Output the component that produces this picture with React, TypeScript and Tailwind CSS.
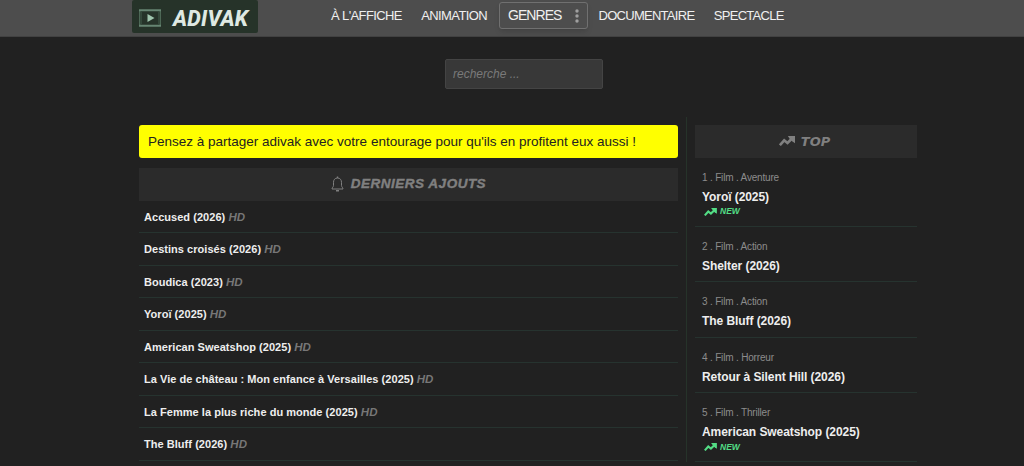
interface Movie {
  title: string
  year: number
}

interface TopMovie extends Movie {
  kind: string
  isNew?: boolean
}

const latest: Movie[] = [
  { title: 'Accused', year: 2026 },
  { title: 'Destins croisés', year: 2026 },
  { title: 'Boudica', year: 2023 },
  { title: 'Yoroï', year: 2025 },
  { title: 'American Sweatshop', year: 2025 },
  { title: 'La Vie de château : Mon enfance à Versailles', year: 2025 },
  { title: 'La Femme la plus riche du monde', year: 2025 },
  { title: 'The Bluff', year: 2026 },
]

const top: TopMovie[] = [
  { title: 'Yoroï', year: 2025, kind: 'Aventure', isNew: true },
  { title: 'Shelter', year: 2026, kind: 'Action' },
  { title: 'The Bluff', year: 2026, kind: 'Action' },
  { title: 'Retour à Silent Hill', year: 2026, kind: 'Horreur' },
  { title: 'American Sweatshop', year: 2025, kind: 'Thriller', isNew: true },
]

function TrendIcon({ className }: { className: string }) {
  return (
    <svg viewBox="0 0 16 10" className={className} fill="none">
      <path d="M.9 9.200 5.200 4.300 8.500 7 12.500 3" stroke="currentColor" strokeWidth="2.600" />
      <path d="M8.800 0H16V7.200L13.200 5.200 11 3.200Z" fill="currentColor" />
    </svg>
  )
}

function BellIcon() {
  return (
    <svg viewBox="0 0 13 16" className="h-[16px] w-[13px]" fill="none" stroke="currentColor">
      <path d="M6.500 2C3.800 2 2.500 4 2.500 6.300V9.500C2.500 11 1 11.500 1 13H12C12 11.500 10.500 11 10.500 9.500V6.300C10.500 4 9.200 2 6.500 2Z" />
      <path d="M6.500 .5V2M5 14.800H8" strokeWidth="1.400" />
    </svg>
  )
}

function Logo() {
  return (
    <a className="flex h-[33px] w-[126px] items-center rounded-[2px] bg-[#263329] pt-[2px] pl-[7px]">
      <svg viewBox="0 0 22 18" className="h-[18px] w-[22px]">
        <path d="M.7 1V17M21.300 1V17" stroke="#4d6856" strokeWidth="1.400" />
        <path d="M0 1.200H22M0 16.800H22" stroke="#668572" strokeWidth="2" />
        <path d="M2.500 2V16M19.500 2V16" stroke="#34493b" />
        <path d="M8.500 5V13L15.500 9Z" fill="#9fc5ad" />
      </svg>
      <span className="ml-[12px] pt-[2px] font-[Roboto,sans-serif] text-[21.500px] leading-none font-extrabold tracking-[0.2px] text-[#dfe9e2] italic">
        ADIVAK
      </span>
    </a>
  )
}

function Header() {
  return (
    <header className="flex h-[37px] items-start border-b border-[#414141] bg-[#4d4d4d] pl-[132px]">
      <Logo />
      <nav className="ml-[73px] flex items-center text-[13px] tracking-[-0.62px] text-[#f0f0f0]">
        <a className="pt-[2px]">À L'AFFICHE</a>
        <a className="ml-[19.500px] pt-[2px]">ANIMATION</a>
        <a className="mt-[2px] ml-[12px] flex h-[27px] w-[89px] items-center justify-between rounded-[3px] border border-[#707070] pr-[8px] pl-[8px] text-[14px] tracking-[-0.95px] shadow-md">
          GENRES
          <svg viewBox="0 0 4 14" className="h-[14px] w-[4px]" fill="#a0a0a0">
            <circle cx="2" cy="2" r="1.700" />
            <circle cx="2" cy="7" r="1.700" />
            <circle cx="2" cy="12" r="1.700" />
          </svg>
        </a>
        <a className="ml-[10.500px] pt-[2px] tracking-[-0.72px]">DOCUMENTAIRE</a>
        <a className="ml-[19.500px] pt-[2px] tracking-[-0.72px]">SPECTACLE</a>
      </nav>
    </header>
  )
}

function LatestRow({ movie }: { movie: Movie }) {
  return (
    <li className="h-[32.5px] border-b border-[#26332f] pl-[5px] text-[11px] leading-[32px] font-bold tracking-[0.04px] text-[#eeeeee]">
      {movie.title} ({movie.year}) <i className="text-[11.500px] font-bold text-[#777777]">HD</i>
    </li>
  )
}

function TopRow({ movie, rank }: { movie: TopMovie; rank: number }) {
  return (
    <li className="border-b border-[#26332f] pt-[13px] pb-[7px] pl-[7px]">
      <p className="text-[10px] leading-[14px] tracking-[-0.18px] text-[#8c8c8c]">
        {rank} . Film . {movie.kind}
      </p>
      <p className="mt-[5px] text-[12px] leading-[15.500px] font-bold tracking-[-0.07px] text-[#eeeeee]">
        {movie.title} ({movie.year})
      </p>
      {movie.isNew && (
        <p className="flex h-[13.500px] items-center gap-[3px] pl-[2px] text-[8.500px] font-bold text-[#53dd85] italic">
          <TrendIcon className="h-[8px] w-[13px]" />
          NEW
        </p>
      )}
    </li>
  )
}

export default function App() {
  return (
    <div className="h-[466px] overflow-hidden bg-[#212121] font-['Liberation_Sans',Arial,sans-serif]">
      <Header />

      <div className="pt-[22px] pl-[445px]">
        <input
          className="block h-[30px] w-[158px] rounded-[2px] border border-[#444444] bg-[#383838] px-[7px] text-[12px] italic placeholder:text-[#7a7a7a]"
          placeholder="recherche ..."
        />
      </div>

      <main className="mt-[28px] flex pl-[139px]">
        <section className="w-[548px] border-r border-[#26332a] pt-[8px] pr-[8px]">
          <p className="h-[33px] rounded-[3px] bg-[#ffff00] pl-[9px] text-[13.500px] leading-[33px] text-[#222222]">
            Pensez à partager adivak avec votre entourage pour qu'ils en profitent eux aussi !
          </p>
          <h2 className="mt-[10px] flex h-[32.500px] items-center justify-center gap-[7px] bg-[#2b2b2b] text-[13.500px] font-bold tracking-[0.5px] text-[#808080] italic [-webkit-text-stroke:0.4px_#808080]">
            <BellIcon />
            DERNIERS AJOUTS
          </h2>
          <ul>
            {latest.map((movie) => (
              <LatestRow key={movie.title} movie={movie} />
            ))}
          </ul>
        </section>

        <aside className="ml-[8px] w-[222px] pt-[8px]">
          <h2 className="flex h-[32.500px] items-center justify-center gap-[6px] bg-[#2b2b2b] pr-[3px] font-['DejaVu_Sans',sans-serif] text-[13px] font-bold text-[#808080] italic">
            <TrendIcon className="h-[10px] w-[16px]" />
            TOP
          </h2>
          <ul>
            {top.map((movie, index) => (
              <TopRow key={movie.title} movie={movie} rank={index + 1} />
            ))}
          </ul>
        </aside>
      </main>
    </div>
  )
}
